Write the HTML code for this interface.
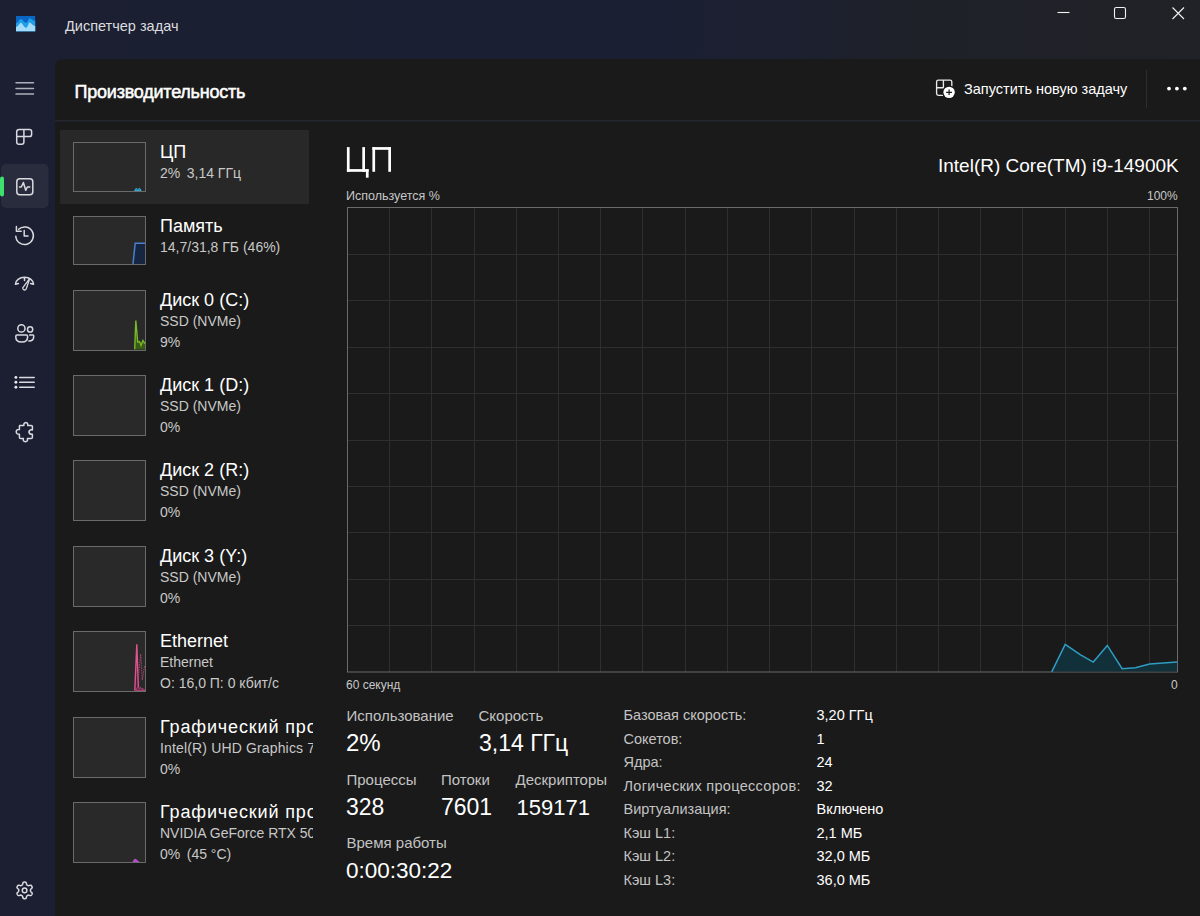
<!DOCTYPE html>
<html><head><meta charset="utf-8"><style>
html,body{margin:0;padding:0;width:1200px;height:916px;overflow:hidden;background:#1c2033;}
body{position:relative;font-family:"Liberation Sans",sans-serif;}
.t{position:absolute;line-height:1;white-space:nowrap;}
.abs{position:absolute;}
</style></head><body>
<div class="abs" style="left:0;top:0;width:1200px;height:916px;background:linear-gradient(92deg,#1b1f31 0%,#1b1f33 52%,#1c2030 64%,#1e2128 74%,#202227 100%);"></div>
<div class="abs" style="left:55px;top:59px;width:1145px;height:857px;background:#1a1a1a;border-top-left-radius:8px;"></div>
<div class="abs" style="left:55px;top:120px;width:1145px;height:1px;background:#252628;"></div><div class="abs" style="left:55px;top:121px;width:1145px;height:1px;background:#1b1e2b;"></div>
<div class="t" style="left:65px;top:19.23px;font-size:14.5px;color:#dcdcde;">Диспетчер задач</div>
<div class="t" style="left:74.5px;top:82.56px;font-size:18px;color:#ffffff;letter-spacing:-0.22px;-webkit-text-stroke:0.5px #ffffff;">Производительность</div>
<div class="t" style="left:964px;top:82.23px;font-size:14.5px;color:#ffffff;">Запустить новую задачу</div>
<div class="abs" style="left:1146px;top:70px;width:1px;height:38px;background:#2e2e2e;"></div>
<div class="abs" style="left:60px;top:130px;width:249px;height:74px;background:#282828;"></div>
<div class="abs" style="left:73px;top:142px;width:71px;height:48px;border:1px solid #6a6a6a;background:#292929;"></div>
<div class="abs" style="left:159px;top:137px;width:154px;height:60px;overflow:hidden;"><div class="t" style="left:1px;top:5.96px;font-size:18px;color:#ffffff;">ЦП</div><div class="t" style="left:1px;top:29.35px;font-size:14px;color:#c8c8c8;">2%<span style="margin-left:6.5px">3,14 ГГц</span></div></div>
<div class="abs" style="left:73px;top:216px;width:71px;height:47px;border:1px solid #6a6a6a;background:#292929;"></div>
<div class="abs" style="left:159px;top:211px;width:154px;height:59px;overflow:hidden;"><div class="t" style="left:1px;top:5.96px;font-size:18px;color:#ffffff;">Память</div><div class="t" style="left:1px;top:29.35px;font-size:14px;color:#c8c8c8;">14,7/31,8 ГБ (46%)</div></div>
<div class="abs" style="left:73px;top:290px;width:71px;height:59px;border:1px solid #6a6a6a;background:#292929;"></div>
<div class="abs" style="left:159px;top:285px;width:154px;height:71px;overflow:hidden;"><div class="t" style="left:1px;top:5.96px;font-size:18px;color:#ffffff;">Диск 0 (C:)</div><div class="t" style="left:1px;top:29.35px;font-size:14px;color:#c8c8c8;">SSD (NVMe)</div><div class="t" style="left:1px;top:49.65px;font-size:14px;color:#c8c8c8;">9%</div></div>
<div class="abs" style="left:73px;top:375px;width:71px;height:59px;border:1px solid #6a6a6a;background:#292929;"></div>
<div class="abs" style="left:159px;top:370px;width:154px;height:71px;overflow:hidden;"><div class="t" style="left:1px;top:5.96px;font-size:18px;color:#ffffff;">Диск 1 (D:)</div><div class="t" style="left:1px;top:29.35px;font-size:14px;color:#c8c8c8;">SSD (NVMe)</div><div class="t" style="left:1px;top:49.65px;font-size:14px;color:#c8c8c8;">0%</div></div>
<div class="abs" style="left:73px;top:460px;width:71px;height:59px;border:1px solid #6a6a6a;background:#292929;"></div>
<div class="abs" style="left:159px;top:455px;width:154px;height:71px;overflow:hidden;"><div class="t" style="left:1px;top:5.96px;font-size:18px;color:#ffffff;">Диск 2 (R:)</div><div class="t" style="left:1px;top:29.35px;font-size:14px;color:#c8c8c8;">SSD (NVMe)</div><div class="t" style="left:1px;top:49.65px;font-size:14px;color:#c8c8c8;">0%</div></div>
<div class="abs" style="left:73px;top:546px;width:71px;height:59px;border:1px solid #6a6a6a;background:#292929;"></div>
<div class="abs" style="left:159px;top:541px;width:154px;height:71px;overflow:hidden;"><div class="t" style="left:1px;top:5.96px;font-size:18px;color:#ffffff;">Диск 3 (Y:)</div><div class="t" style="left:1px;top:29.35px;font-size:14px;color:#c8c8c8;">SSD (NVMe)</div><div class="t" style="left:1px;top:49.65px;font-size:14px;color:#c8c8c8;">0%</div></div>
<div class="abs" style="left:73px;top:631px;width:71px;height:59px;border:1px solid #6a6a6a;background:#292929;"></div>
<div class="abs" style="left:159px;top:626px;width:154px;height:71px;overflow:hidden;"><div class="t" style="left:1px;top:5.96px;font-size:18px;color:#ffffff;">Ethernet</div><div class="t" style="left:1px;top:29.35px;font-size:14px;color:#c8c8c8;">Ethernet</div><div class="t" style="left:1px;top:49.65px;font-size:14px;color:#c8c8c8;">О: 16,0 П: 0 кбит/с</div></div>
<div class="abs" style="left:73px;top:717px;width:71px;height:59px;border:1px solid #6a6a6a;background:#292929;"></div>
<div class="abs" style="left:159px;top:712px;width:154px;height:71px;overflow:hidden;"><div class="t" style="left:1px;top:5.96px;font-size:18px;color:#ffffff;letter-spacing:0.85px;">Графический процессор 0</div><div class="t" style="left:1px;top:29.35px;font-size:14px;color:#c8c8c8;letter-spacing:0.15px;">Intel(R) UHD Graphics 770</div><div class="t" style="left:1px;top:49.65px;font-size:14px;color:#c8c8c8;">0%</div></div>
<div class="abs" style="left:73px;top:802px;width:71px;height:59px;border:1px solid #6a6a6a;background:#292929;"></div>
<div class="abs" style="left:159px;top:797px;width:154px;height:71px;overflow:hidden;"><div class="t" style="left:1px;top:5.96px;font-size:18px;color:#ffffff;letter-spacing:0.85px;">Графический процессор 1</div><div class="t" style="left:1px;top:29.35px;font-size:14px;color:#c8c8c8;">NVIDIA GeForce RTX 5090</div><div class="t" style="left:1px;top:49.65px;font-size:14px;color:#c8c8c8;">0%<span style="margin-left:6.5px">(45 °C)</span></div></div>
<svg class="abs" style="left:0;top:0" width="400" height="200"><g fill="#ffffff"><rect x="346.9" y="147.1" width="2.7" height="24.7"/><rect x="362.3" y="147.1" width="2.7" height="24.7"/><rect x="346.9" y="169.1" width="21.7" height="2.7"/><rect x="365.9" y="169.1" width="2.7" height="8.6"/><rect x="372.4" y="147.1" width="2.7" height="24.7"/><rect x="388.3" y="147.1" width="2.7" height="24.7"/><rect x="372.4" y="147.1" width="18.6" height="2.7"/></g></svg>
<div class="t" style="left:938px;top:155.92px;font-size:19px;color:#ffffff;">Intel(R) Core(TM) i9-14900K</div>
<div class="t" style="left:346px;top:189.72px;font-size:12.5px;color:#c8c8c8;">Используется %</div>
<div class="t" style="left:1147px;top:190.14px;font-size:12px;color:#c8c8c8;">100%</div>
<div class="t" style="left:346px;top:679.34px;font-size:12px;color:#c8c8c8;">60 секунд</div>
<div class="t" style="left:1171px;top:679.34px;font-size:12px;color:#c8c8c8;">0</div>
<svg class="abs" style="left:0;top:0" width="1200" height="916"><line x1="389.5" y1="207" x2="389.5" y2="672" stroke="#2f2f2f" stroke-width="1"/><line x1="431.5" y1="207" x2="431.5" y2="672" stroke="#2f2f2f" stroke-width="1"/><line x1="474.5" y1="207" x2="474.5" y2="672" stroke="#2f2f2f" stroke-width="1"/><line x1="516.5" y1="207" x2="516.5" y2="672" stroke="#2f2f2f" stroke-width="1"/><line x1="558.5" y1="207" x2="558.5" y2="672" stroke="#2f2f2f" stroke-width="1"/><line x1="600.5" y1="207" x2="600.5" y2="672" stroke="#2f2f2f" stroke-width="1"/><line x1="642.5" y1="207" x2="642.5" y2="672" stroke="#2f2f2f" stroke-width="1"/><line x1="685.5" y1="207" x2="685.5" y2="672" stroke="#2f2f2f" stroke-width="1"/><line x1="727.5" y1="207" x2="727.5" y2="672" stroke="#2f2f2f" stroke-width="1"/><line x1="769.5" y1="207" x2="769.5" y2="672" stroke="#2f2f2f" stroke-width="1"/><line x1="811.5" y1="207" x2="811.5" y2="672" stroke="#2f2f2f" stroke-width="1"/><line x1="854.5" y1="207" x2="854.5" y2="672" stroke="#2f2f2f" stroke-width="1"/><line x1="896.5" y1="207" x2="896.5" y2="672" stroke="#2f2f2f" stroke-width="1"/><line x1="938.5" y1="207" x2="938.5" y2="672" stroke="#2f2f2f" stroke-width="1"/><line x1="980.5" y1="207" x2="980.5" y2="672" stroke="#2f2f2f" stroke-width="1"/><line x1="1022.5" y1="207" x2="1022.5" y2="672" stroke="#2f2f2f" stroke-width="1"/><line x1="1065.5" y1="207" x2="1065.5" y2="672" stroke="#2f2f2f" stroke-width="1"/><line x1="1107.5" y1="207" x2="1107.5" y2="672" stroke="#2f2f2f" stroke-width="1"/><line x1="1149.5" y1="207" x2="1149.5" y2="672" stroke="#2f2f2f" stroke-width="1"/><line x1="347" y1="254.5" x2="1177" y2="254.5" stroke="#2f2f2f" stroke-width="1"/><line x1="347" y1="300.5" x2="1177" y2="300.5" stroke="#2f2f2f" stroke-width="1"/><line x1="347" y1="347.5" x2="1177" y2="347.5" stroke="#2f2f2f" stroke-width="1"/><line x1="347" y1="393.5" x2="1177" y2="393.5" stroke="#2f2f2f" stroke-width="1"/><line x1="347" y1="440.5" x2="1177" y2="440.5" stroke="#2f2f2f" stroke-width="1"/><line x1="347" y1="486.5" x2="1177" y2="486.5" stroke="#2f2f2f" stroke-width="1"/><line x1="347" y1="532.5" x2="1177" y2="532.5" stroke="#2f2f2f" stroke-width="1"/><line x1="347" y1="579.5" x2="1177" y2="579.5" stroke="#2f2f2f" stroke-width="1"/><line x1="347" y1="625.5" x2="1177" y2="625.5" stroke="#2f2f2f" stroke-width="1"/><rect x="347.5" y="207.5" width="830" height="464.5" fill="none" stroke="#6b6b6b" stroke-width="1"/><polygon points="1051.7,671.9 1065.2,644.4 1080.2,654.6 1093.3,662.1 1107.3,645.4 1122.1,668.7 1135.4,667.7 1149.6,664 1177,661.9 1177,671.5 1051.7,671.5" fill="#12303a"/><polyline points="1051.7,671.9 1065.2,644.4 1080.2,654.6 1093.3,662.1 1107.3,645.4 1122.1,668.7 1135.4,667.7 1149.6,664 1177,661.9" fill="none" stroke="#2f9cc2" stroke-width="1.5" stroke-linejoin="miter"/></svg>
<div class="t" style="left:346.5px;top:707.50px;font-size:15px;color:#c3c3c3;">Использование</div>
<div class="t" style="left:478.5px;top:707.50px;font-size:15px;color:#c3c3c3;">Скорость</div>
<div class="t" style="left:346px;top:731.38px;font-size:24px;color:#ffffff;">2%</div>
<div class="t" style="left:479px;top:732.23px;font-size:23px;color:#ffffff;">3,14 ГГц</div>
<div class="t" style="left:346.5px;top:771.60px;font-size:15px;color:#c3c3c3;">Процессы</div>
<div class="t" style="left:441px;top:771.60px;font-size:15px;color:#c3c3c3;">Потоки</div>
<div class="t" style="left:515.5px;top:771.60px;font-size:15px;color:#c3c3c3;">Дескрипторы</div>
<div class="t" style="left:346px;top:796.23px;font-size:23px;color:#ffffff;">328</div>
<div class="t" style="left:441px;top:796.23px;font-size:23px;color:#ffffff;">7601</div>
<div class="t" style="left:516.5px;top:797.08px;font-size:22px;color:#ffffff;">159171</div>
<div class="t" style="left:346.5px;top:835.30px;font-size:15px;color:#c3c3c3;">Время работы</div>
<div class="t" style="left:346px;top:859.95px;font-size:22.5px;color:#ffffff;">0:00:30:22</div>
<div class="t" style="left:623.5px;top:708.13px;font-size:14.5px;color:#c3c3c3;">Базовая скорость:</div>
<div class="t" style="left:816.5px;top:708.13px;font-size:14.5px;color:#ffffff;">3,20 ГГц</div>
<div class="t" style="left:623.5px;top:731.64px;font-size:14.5px;color:#c3c3c3;">Сокетов:</div>
<div class="t" style="left:816.5px;top:731.64px;font-size:14.5px;color:#ffffff;">1</div>
<div class="t" style="left:623.5px;top:755.15px;font-size:14.5px;color:#c3c3c3;">Ядра:</div>
<div class="t" style="left:816.5px;top:755.15px;font-size:14.5px;color:#ffffff;">24</div>
<div class="t" style="left:623.5px;top:778.66px;font-size:14.5px;color:#c3c3c3;letter-spacing:0.3px;">Логических процессоров:</div>
<div class="t" style="left:816.5px;top:778.66px;font-size:14.5px;color:#ffffff;">32</div>
<div class="t" style="left:623.5px;top:802.17px;font-size:14.5px;color:#c3c3c3;">Виртуализация:</div>
<div class="t" style="left:816.5px;top:802.17px;font-size:14.5px;color:#ffffff;">Включено</div>
<div class="t" style="left:623.5px;top:825.68px;font-size:14.5px;color:#c3c3c3;">Кэш L1:</div>
<div class="t" style="left:816.5px;top:825.68px;font-size:14.5px;color:#ffffff;">2,1 МБ</div>
<div class="t" style="left:623.5px;top:849.19px;font-size:14.5px;color:#c3c3c3;">Кэш L2:</div>
<div class="t" style="left:816.5px;top:849.19px;font-size:14.5px;color:#ffffff;">32,0 МБ</div>
<div class="t" style="left:623.5px;top:872.70px;font-size:14.5px;color:#c3c3c3;">Кэш L3:</div>
<div class="t" style="left:816.5px;top:872.70px;font-size:14.5px;color:#ffffff;">36,0 МБ</div>
<svg class="abs" style="left:0;top:0" width="1200" height="916"><path d="M134.6 190.5 L136.2 188.2 L137.9 189.6 L139.6 188.2 L141.2 190.5 Z" fill="#1f7fa3" stroke="#35a7d0" stroke-width="1"/><path d="M133 264 L135.2 243.2 H145 V264 Z" fill="#172640"/><path d="M133 264 L135.2 243.2 H145" fill="none" stroke="#4a7fcc" stroke-width="1.5"/><polygon points="134.7,349.2 135.8,320.5 137.7,342.1 139.6,341.5 141,345.4 142.9,340.5 145,343.7 145,349.5 134.7,349.5" fill="#3a5a18"/><polyline points="134.7,349.2 135.8,320.5 137.7,342.1 139.6,341.5 141,345.4 142.9,340.5 145,343.7" fill="none" stroke="#78b82a" stroke-width="1.4"/><polygon points="134.8,690.6 136.8,644.2 138.4,687.4" fill="#4a2236"/><polyline points="134.8,690.6 136.8,644.2 138.4,687.4" fill="none" stroke="#dd5590" stroke-width="1.4"/><polyline points="138.8,673 140.7,654 142.3,680 144.6,665.8 145,667" fill="none" stroke="#a8456f" stroke-width="1" stroke-dasharray="1.5 1"/><path d="M135.5 690.5 Q137.5 685.5 139 688.5 Q140.5 686 142 689 Q143.5 688 145 690.5 Z" fill="#6e2a4c" stroke="#c04a80" stroke-width="0.8"/><path d="M132.6 862 C133.8 858.8 135.5 857.8 136.6 859.6 C137.4 860.6 138.6 861 139.6 862 Z" fill="#b54ccc"/></svg>
<svg class="abs" style="left:0;top:0" width="1200" height="916"><defs><linearGradient id="ag" x1="0" y1="0" x2="0" y2="1"><stop offset="0" stop-color="#0a6cc8"/><stop offset="1" stop-color="#1a8ee0"/></linearGradient></defs><rect x="16" y="16" width="19.2" height="15.3" fill="#0a66c2"/><path d="M16 23 C18 23.5 19 19 20.8 19 C22.6 19 24 22.8 26.1 22.8 C28 22.8 28.3 18.3 29.6 18.3 C31.2 18.3 32.5 21 35.2 21 V31.3 H16 Z" fill="#1d9ee6"/><path d="M16 26.9 C18.5 26.9 19.5 22.7 20.8 22.7 C22.3 22.7 24 27.7 26.1 27.7 C28 27.7 28.4 22.5 29.6 22.5 C31 22.5 32.5 25.9 35.2 25.9 V31.3 H16 Z" fill="#a3dcfa"/><g stroke="#f2f2f2" stroke-width="1.1" fill="none"><line x1="1057.5" y1="12.5" x2="1069.5" y2="12.5"/><rect x="1114.5" y="7.5" width="11" height="11" rx="1.8"/><path d="M1172.5 7.5 L1184 19 M1184 7.5 L1172.5 19"/></g><rect x="1" y="164" width="47.5" height="44" rx="5" fill="#282c3c"/><rect x="0" y="176.5" width="4" height="20" rx="2" fill="#3ee06e"/><g stroke="#d9dadf" stroke-width="1.5" fill="none" stroke-linecap="round" stroke-linejoin="round"><path d="M16 82.8 H33.5 M16 88.6 H33.5 M16 93.9 H33.5" stroke="#aeb1bb"/><path d="M19.2 129.5 H29.5 Q31.6 129.5 31.6 131.6 V134.4 Q31.6 136.6 29.5 136.6 H23.9 V142 Q23.9 144.3 21.7 144.3 H19 Q16.7 144.3 16.7 142 V131.8 Q16.7 129.5 19.2 129.5 Z M23.9 129.5 V136.6 M16.7 136.6 H23.9"/><rect x="16.8" y="178.7" width="16" height="16" rx="3"/><path d="M19.5 187 H21.3 L23.4 182.5 L25.7 190.3 L27.3 187 H29.8"/><path d="M15.8 236.2 A8.8 8.8 0 1 0 18.6 229.3"/><path d="M16.4 226.5 V231.2 H21.2 M24.2 230.6 V236 H28"/><path d="M15.4 284.3 A9.1 7 0 0 1 33.6 284.3 M15.6 284.2 L18.4 283.6 M24.5 277.4 V280.4 M33.4 284.2 L30.6 283.6"/><path d="M29.8 278.4 L26.1 289.2 A1.9 1.9 0 0 1 22.7 287.9 Z" stroke-width="1.3"/><circle cx="21.4" cy="328.4" r="3.6"/><circle cx="30.1" cy="329.4" r="2.6"/><path d="M17 334.9 H26.3 Q27.6 334.9 27.6 336.2 V337 Q27.6 342 22 342 H21.5 Q15.8 342 15.8 337 V336.2 Q15.8 334.9 17 334.9 Z"/><path d="M29.6 334.9 H33 Q33.7 334.9 33.7 335.7 V336.5 Q33.7 341 28.9 341.1"/><path d="M19.7 377.4 H34.2 M19.7 382.3 H34.2 M19.7 387.2 H34.2"/></g><g fill="#e6e6ea"><circle cx="15.9" cy="377.4" r="1.45"/><circle cx="15.9" cy="382.3" r="1.45"/><circle cx="15.9" cy="387.2" r="1.45"/></g><g stroke="#d9dadf" stroke-width="1.5" fill="none" stroke-linecap="round" stroke-linejoin="round"><path d="M19.6 425.4 H23.9 Q23.4 422.9 25.9 422.6 Q28.2 422.9 27.7 425.4 H31.2 Q32.4 425.4 32.4 426.6 V429.9 Q29.4 429.5 28.9 432 Q29.4 434.5 32.4 434.2 V437.3 Q32.4 438.6 31.2 438.6 H27.4 Q28.1 441.6 25.4 441.7 Q22.7 441.6 23.4 438.6 H20.6 Q19.4 438.6 19.4 437.3 V434.2 Q16.4 434.5 16.2 431.8 Q16.4 429.2 19.4 429.6 V426.6 Q19.4 425.4 19.6 425.4 Z"/><circle cx="24.6" cy="890.4" r="2.3"/><path d="M30.50 890.40 L30.50 890.66 L30.50 890.92 L30.52 891.18 L30.62 891.46 L30.91 891.80 L31.46 892.24 L31.98 892.73 L32.20 893.17 L32.20 893.55 L32.10 893.90 L31.96 894.23 L31.79 894.55 L31.60 894.86 L31.38 895.15 L31.13 895.41 L30.79 895.60 L30.30 895.62 L29.62 895.42 L28.97 895.17 L28.53 895.08 L28.24 895.14 L28.00 895.25 L27.77 895.38 L27.55 895.51 L27.33 895.64 L27.10 895.77 L26.89 895.92 L26.69 896.15 L26.54 896.57 L26.44 897.26 L26.27 897.95 L26.00 898.36 L25.67 898.55 L25.32 898.65 L24.96 898.69 L24.60 898.70 L24.24 898.69 L23.88 898.65 L23.53 898.55 L23.20 898.36 L22.93 897.95 L22.76 897.26 L22.66 896.57 L22.51 896.15 L22.31 895.92 L22.10 895.77 L21.87 895.64 L21.65 895.51 L21.43 895.38 L21.20 895.25 L20.96 895.14 L20.67 895.08 L20.23 895.17 L19.58 895.42 L18.90 895.62 L18.41 895.60 L18.07 895.41 L17.82 895.15 L17.60 894.86 L17.41 894.55 L17.24 894.23 L17.10 893.90 L17.00 893.55 L17.00 893.17 L17.22 892.73 L17.74 892.24 L18.29 891.80 L18.58 891.46 L18.68 891.18 L18.70 890.92 L18.70 890.66 L18.70 890.40 L18.70 890.14 L18.70 889.88 L18.68 889.62 L18.58 889.34 L18.29 889.00 L17.74 888.56 L17.22 888.07 L17.00 887.63 L17.00 887.25 L17.10 886.90 L17.24 886.57 L17.41 886.25 L17.60 885.94 L17.82 885.65 L18.07 885.39 L18.41 885.20 L18.90 885.18 L19.58 885.38 L20.23 885.63 L20.67 885.72 L20.96 885.66 L21.20 885.55 L21.43 885.42 L21.65 885.29 L21.87 885.16 L22.10 885.03 L22.31 884.88 L22.51 884.65 L22.66 884.23 L22.76 883.54 L22.93 882.85 L23.20 882.44 L23.53 882.25 L23.88 882.15 L24.24 882.11 L24.60 882.10 L24.96 882.11 L25.32 882.15 L25.67 882.25 L26.00 882.44 L26.27 882.85 L26.44 883.54 L26.54 884.23 L26.69 884.65 L26.89 884.88 L27.10 885.03 L27.33 885.16 L27.55 885.29 L27.77 885.42 L28.00 885.55 L28.24 885.66 L28.53 885.72 L28.97 885.63 L29.62 885.38 L30.30 885.18 L30.79 885.20 L31.13 885.39 L31.38 885.65 L31.60 885.94 L31.79 886.25 L31.96 886.57 L32.10 886.90 L32.20 887.25 L32.20 887.63 L31.98 888.07 L31.46 888.56 L30.91 889.00 L30.62 889.34 L30.52 889.62 L30.50 889.88 L30.50 890.14 Z"/></g><g stroke="#e8e8e8" stroke-width="1.35" fill="none" stroke-linejoin="round"><path d="M943 95.3 H938.3 Q936.6 95.3 936.6 93.6 V81.8 Q936.6 80.1 938.3 80.1 H950.1 Q951.8 80.1 951.8 81.8 V86.5 M936.6 87.7 H943.4 V80.1"/></g><circle cx="949.1" cy="92.35" r="6.9" fill="#1a1a1a"/><circle cx="949.1" cy="92.35" r="5.7" fill="#ffffff"/><path d="M949.1 89.6 V95.1 M946.2 92.35 H952" stroke="#1a1a1a" stroke-width="1.2"/><g fill="#ffffff"><circle cx="1169" cy="88.6" r="1.9"/><circle cx="1176.9" cy="88.6" r="1.9"/><circle cx="1184.8" cy="88.6" r="1.9"/></g></svg>
</body></html>
